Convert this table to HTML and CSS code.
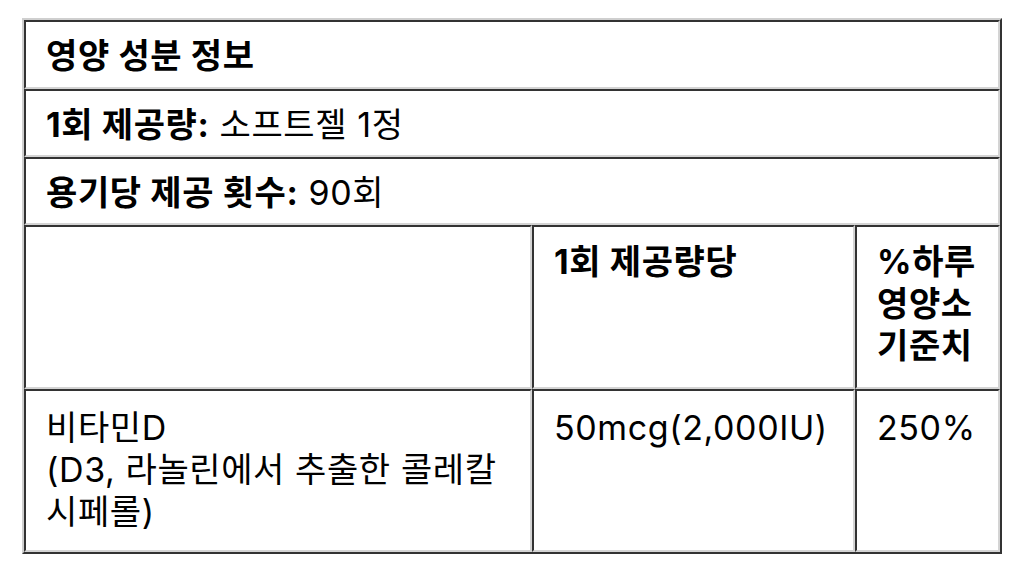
FILE: index.html
```html
<!DOCTYPE html>
<html lang="ko">
<head>
<meta charset="utf-8">
<link rel="stylesheet" href="styles.css">
</head>
<body>
<table class="facts">
  <colgroup>
    <col class="c1"><col class="c2"><col class="c3">
  </colgroup>
  <tr class="r-single r-first"><th colspan="3">영양 성분 정보</th></tr>
  <tr class="r-single"><td colspan="3"><b>1회 제공량:</b> 소프트젤 1정</td></tr>
  <tr class="r-single"><td colspan="3"><b>용기당 제공 횟수:</b> 90회</td></tr>
  <tr class="r-head">
    <th></th>
    <th>1회 제공량당</th>
    <th>%하루 영양소 기준치</th>
  </tr>
  <tr class="r-item">
    <td>비타민D<br>(D3, 라놀린에서 추출한 콜레칼시페롤)</td>
    <td>50mcg(2,000IU)</td>
    <td>250%</td>
  </tr>
</table>
</body>
</html>
```

FILE: styles.css
```css
html, body {
  margin: 0;
  padding: 0;
  background: #fff;
}
body {
  padding: 18px 0 0 22px;
  font-family: "Inter", "Noto Sans CJK KR", sans-serif;
  color: #000;
}
.facts {
  width: 980px;
  table-layout: fixed;
  border-collapse: separate;
  border-spacing: 0;
  border-style: solid;
  border-width: 2px;
  border-color: #cfcfcf #333 #333 #cfcfcf;
  font-size: 34px;
  line-height: 42px;
  letter-spacing: 0.6px;
}
.c1 { width: 508px; }
.c2 { width: 323px; }
.c3 { width: 145px; }
.facts th,
.facts td {
  border-style: solid;
  border-width: 2px;
  border-color: #333 #d4d4d4 #d4d4d4 #333;
  padding: 13px 20px 9px;
  text-align: left;
  vertical-align: top;
  box-sizing: border-box;
}
.facts th { font-weight: 700; }
.facts b { font-weight: 700; }
.r-single th, .r-single td { height: 68px; }
.r-first th { height: 69px; }
.r-head th { height: 164px; padding-top: 14px; }
.r-item td { height: 163px; padding-top: 16px; font-weight: 400; }
```
